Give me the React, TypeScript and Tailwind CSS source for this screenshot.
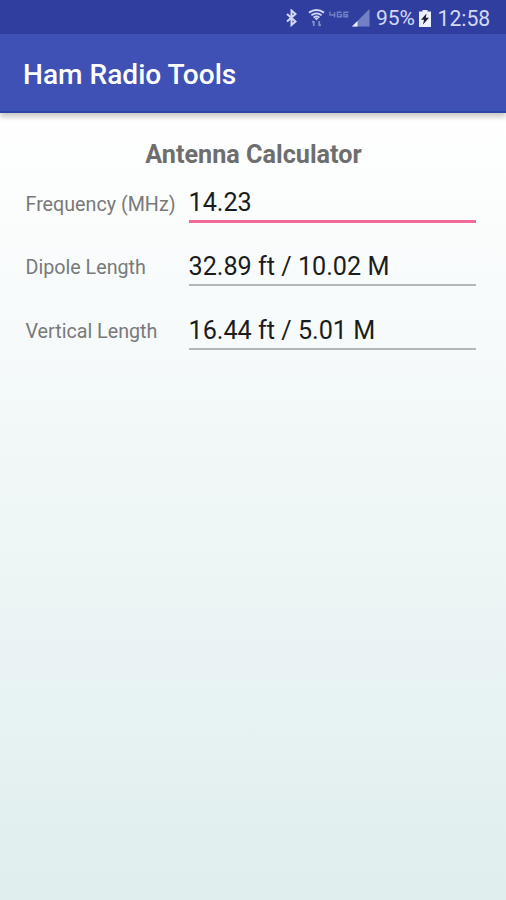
import type { JSX } from 'react';

type Field = {
  label: string;
  value: string;
  active?: boolean;
};

/** Rows of the antenna calculator */
const fields: Field[] = [
  { label: 'Frequency (MHz)', value: '14.23', active: true },
  { label: 'Dipole Length', value: '32.89 ft / 10.02 M' },
  { label: 'Vertical Length', value: '16.44 ft / 5.01 M' },
];

/**
 * Device status bar with connection icons, battery level and clock.
 * @returns {JSX.Element} JSX.Element.
 */
const StatusBar = (): JSX.Element => {
  return (
    <div className="flex h-[34px] items-center bg-[#303f9f] pl-[285px] pt-[2px] text-[#d3d9f5]">
      {/** Bluetooth */}
      <svg width="13" height="18" viewBox="0 0 13 18" fill="none" stroke="currentColor" strokeWidth="2">
        <path d="M2 5 L10.5 12.5 L6.5 16 V1.5 L10.5 5 L2 12.5" />
      </svg>
      {/** Wi-Fi with transfer arrows */}
      <svg className="ml-[10px]" width="17" height="18" viewBox="0 0 17 18" fill="none" stroke="currentColor">
        <path d="M1 3.6 Q8.5 -1.4 16 3.6" strokeWidth="2" />
        <path d="M3.4 6.2 Q8.5 2.6 13.6 6.2" strokeWidth="1.8" />
        <path d="M5.6 8.6 Q8.5 6.2 11.4 8.6" strokeWidth="1.8" />
        <path d="M6.3 8.8 H10.7 L8.5 11.4 Z" fill="currentColor" stroke="none" />
        <path d="M5.8 12 V17 M4.2 13.5 L5.8 12 M11.2 12 V17 M11.2 17 L12.8 15.5" strokeWidth="1.8" opacity=".5" />
      </svg>
      {/** Network type */}
      <svg className="mb-[6px] ml-[4px]" width="20" height="8" viewBox="0 0 20 8" fill="none" stroke="#7480c6" strokeWidth="1.4">
        <path d="M1 0.5 V4 H6.5 M5.5 1 V6.5 M12.5 1.2 H8.5 V5.8 H12.5 V3.6 H10.5 M19.5 1.2 H15 V5.8 H18.5 V3.8 H16" />
      </svg>
      {/** Signal strength */}
      <svg className="ml-[3px]" width="18" height="18" viewBox="0 0 18 18">
        <path d="M17.5 0 V17.5 H0 Z" fill="#7480c6" />
        <path d="M5.5 12 V17.5 H0 Z" fill="#edf0ff" />
      </svg>
      <span className="ml-[6px] w-[41px] whitespace-nowrap pt-px text-[21px] leading-none">95%</span>
      {/** Charging battery */}
      <svg className="ml-[2px]" width="12" height="17" viewBox="0 0 12 17">
        <path d="M0 1.5 H3.5 V0 H8.5 V1.5 H12 V17 H0 Z" fill="#edf0ff" />
        <path d="M7.5 3.5 L2 9.8 H5 L4 14.5 L10 7.7 H6.8 Z" fill="#1c2033" />
      </svg>
      <span className="ml-[6.5px] whitespace-nowrap pt-px text-[21.2px] leading-none">12:58</span>
    </div>
  );
};

/**
 * Label with its value and an underline; the active one is pink.
 * @param   {Field}       props - Field props.
 * @returns {JSX.Element}       JSX.Element.
 */
const FieldRow = ({ label, value, active }: Field): JSX.Element => {
  return (
    <div className="flex h-[63.6px] items-start">
      <div className="w-[163px] whitespace-nowrap pt-[8px] text-[19.7px] leading-[26px] text-[#797979]">
        {label}
      </div>
      <div
        className={
          active
            ? 'h-[39px] w-[287px] whitespace-nowrap border-b-[3px] border-[#f26a97] text-[25.2px] leading-[38px] text-[#1c1c1c]'
            : 'h-[39px] w-[287px] whitespace-nowrap border-b-2 border-[#b4b7b7] text-[25.2px] leading-[39px] text-[#1c1c1c]'
        }
      >
        {value}
      </div>
    </div>
  );
};

const App = (): JSX.Element => {
  return (
    <div className="flex h-[900px] w-[506px] flex-col overflow-hidden bg-linear-to-b from-white from-12% to-[#e0eeee] font-[Roboto,sans-serif]">
      <StatusBar />
      {/** App bar */}
      <header className="flex h-[79px] shrink-0 items-center border-b-2 border-[#2b46a8] bg-[#3f51b5] pl-[23px] pt-[6px] shadow-[0_4px_5px_rgba(60,50,40,0.26)]">
        <h1 className="whitespace-nowrap text-[28.1px] font-medium leading-none text-white">Ham Radio Tools</h1>
      </header>
      <main className="pl-[25.5px] pt-[26px]">
        <h2 className="w-[456px] text-center text-[25.2px] font-bold leading-[32px] text-[#6e6e6e]">
          Antenna Calculator
        </h2>
        <div className="pt-[12.6px]">
          {fields.map((field) => (
            <FieldRow key={field.label} {...field} />
          ))}
        </div>
      </main>
    </div>
  );
};

export default App;
